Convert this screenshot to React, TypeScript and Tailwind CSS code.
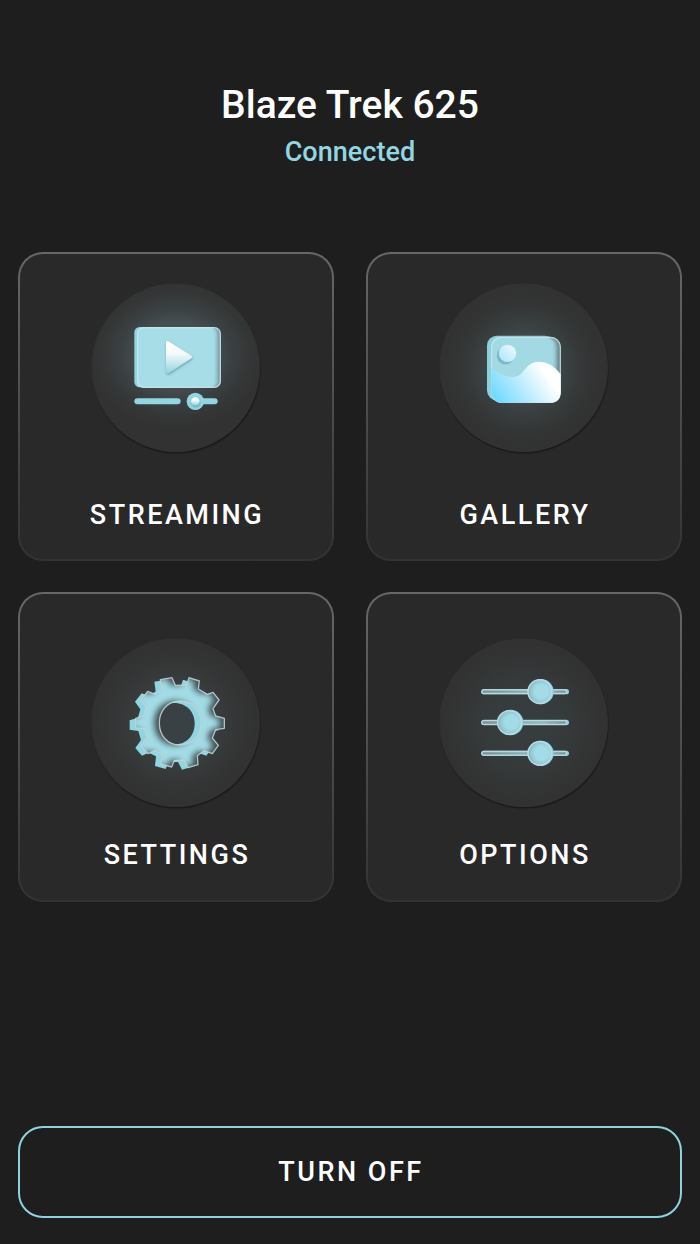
import type { ReactNode } from "react";

const GEAR =
  "M121 44L156 38L166 61L200 60L207 38L238 48L235 72L262 88L279 82L297 105L279 131L287 153L313 160V190L287 194L277 219L295 241L277 266L252 257L232 272L234 299L204 308L192 285L163 286L155 306L123 297L126 268L104 257L84 266L64 243L81 219L73 192L47 188V160L72 152L79 127L63 104L83 79L106 88L125 73Z";
const HOLE = "M180 108C219 108 243 138 243 174S219 240 180 240S118 210 118 174S142 108 180 108Z";
const BACK_HOLE = "M163 114C199 114 224 140 224 176S199 238 163 238S100 210 100 174S124 114 163 114Z";

function InnerShadow({ id, dx, blur, opacity }: { id: string; dx: number; blur: string; opacity: number }) {
  return (
    <filter id={id} x="-10%" y="-10%" width="120%" height="120%" colorInterpolationFilters="sRGB">
      <feComponentTransfer in="SourceAlpha" result="inverse">
        <feFuncA type="table" tableValues="1 0" />
      </feComponentTransfer>
      <feOffset in="inverse" dx={dx} dy="0" />
      <feGaussianBlur stdDeviation={blur} />
      <feComposite in2="SourceAlpha" operator="in" result="shade" />
      <feColorMatrix in="shade" values={`0 0 0 0 0.1  0 0 0 0 0.1  0 0 0 0 0.1  0 0 0 ${opacity} 0`} result="tint" />
      <feMerge>
        <feMergeNode in="SourceGraphic" />
        <feMergeNode in="tint" />
      </feMerge>
    </filter>
  );
}

function StreamingIcon() {
  return (
    <svg viewBox="0 0 168 168" className="size-full">
      <defs>
        <linearGradient id="play" x1="0" y1="0" x2="0" y2="1">
          <stop offset="0.1" stopColor="#fff" />
          <stop offset="0.4" stopColor="#f3f8fa" />
          <stop offset="1" stopColor="#8fd4e0" />
        </linearGradient>
        <InnerShadow id="screenShade" dx={-9} blur="7 1.5" opacity={0.42} />
        <filter id="soft" x="-30%" y="-30%" width="160%" height="160%">
          <feDropShadow dx="1" dy="4" stdDeviation="3" floodColor="#3d7580" floodOpacity="0.6" />
        </filter>
      </defs>
      <g transform="translate(33 31) scale(.33333)">
        <rect x="28" y="36" width="249" height="181" rx="16" fill="#8fd6e2" />
        <rect x="37" y="37" width="250" height="181" rx="19" fill="#a7dde7" filter="url(#screenShade)" />
        <rect x="38" y="38" width="248" height="179" rx="18" fill="none" stroke="#d0ebf0" strokeOpacity=".8" strokeWidth="4" />
        <path d="M123 84Q123 74 132 80L197 121Q205 126 197 131L132 174Q123 179 123 169Z" fill="url(#play)" filter="url(#soft)" />
        <path d="M37 259H158M230 259H269" stroke="#93d6e2" strokeWidth="18" strokeLinecap="round" />
        <circle cx="211" cy="259" r="26" fill="#93d6e2" />
        <circle cx="211" cy="259" r="12.500" fill="url(#play)" filter="url(#soft)" />
      </g>
    </svg>
  );
}

function GalleryIcon() {
  return (
    <svg viewBox="0 0 168 168" className="size-full">
      <defs>
        <linearGradient id="hill" gradientUnits="userSpaceOnUse" x1="65" y1="245" x2="205" y2="150">
          <stop offset="0" stopColor="#6ed9ff" />
          <stop offset="0.4" stopColor="#a9e7ff" />
          <stop offset="1" stopColor="#fff" />
        </linearGradient>
        <linearGradient id="sun" x1="0" y1="1" x2="1" y2="0">
          <stop offset="0" stopColor="#a5e4fa" />
          <stop offset="1" stopColor="#f4fcff" />
        </linearGradient>
        <InnerShadow id="photoShade" dx={-13} blur="7 1.5" opacity={0.48} />
        <filter id="sunShadow" x="-40%" y="-40%" width="180%" height="180%">
          <feDropShadow dx="-6" dy="7" stdDeviation="2" floodColor="#6ba9b5" floodOpacity="0.7" />
        </filter>
      </defs>
      <g transform="translate(35 36) scale(.33333)">
        <rect x="36" y="47" width="204" height="194" rx="30" fill="#8bd0dd" />
        <rect x="48" y="50" width="209" height="198" rx="31" fill="#a2d9e2" filter="url(#photoShade)" />
        <rect x="50" y="52" width="206" height="195" rx="30" fill="none" stroke="#cfe9ee" strokeOpacity=".75" strokeWidth="4" />
        <path
          d="M49 143Q80 170 112 171C151 171 147 125 191 125C218 125 239 139 257 163V215Q257 248 226 248H82C62 248 49 232 49 216Z"
          fill="url(#hill)"
        />
        <circle cx="97.500" cy="100" r="26" fill="url(#sun)" filter="url(#sunShadow)" />
      </g>
    </svg>
  );
}

function SettingsIcon() {
  return (
    <svg viewBox="0 0 168 168" className="size-full">
      <defs>
        <InnerShadow id="gearShade" dx={-15} blur="10" opacity={0.75} />
      </defs>
      <g transform="translate(28 26) scale(.33333)">
        <path d={GEAR} transform="translate(-18 6)" fill="#8fd6e2" />
        <path d={BACK_HOLE} fill="#394144" />
        <path d={GEAR + HOLE} fillRule="evenodd" fill="#a3dce6" filter="url(#gearShade)" />
        <path d={GEAR + HOLE} fill="none" stroke="#c3d3d6" strokeOpacity=".85" strokeWidth="4" strokeLinejoin="round" />
      </g>
    </svg>
  );
}

function OptionRow({ y, x }: { y: number; x: number }) {
  return (
    <g>
      <path d={`M42 ${y}H289`} stroke="#84d6e4" strokeWidth="16" strokeLinecap="round" />
      <path d={`M41 ${y}H284`} stroke="#bcd6db" strokeWidth="15" strokeLinecap="round" />
      <path d={`M41 ${y}H284`} stroke="url(#track)" strokeWidth="7" strokeLinecap="round" />
      <circle cx={x + 3} cy={y} r="38" fill="#84d6e4" />
      <circle cx={x - 0.5} cy={y} r="35.500" fill="url(#knob)" stroke="#b7dce3" strokeWidth="4.500" />
    </g>
  );
}

function OptionsIcon() {
  return (
    <svg viewBox="0 0 168 168" className="size-full">
      <defs>
        <linearGradient id="track" gradientUnits="userSpaceOnUse" x1="38" y1="0" x2="289" y2="0">
          <stop offset="0" stopColor="#798f94" />
          <stop offset="0.35" stopColor="#83a5ac" />
          <stop offset="0.7" stopColor="#8fb9c1" />
          <stop offset="1" stopColor="#7b9298" />
        </linearGradient>
        <radialGradient id="knob" cx="0.58" cy="0.5" r="0.62">
          <stop offset="0.45" stopColor="#a3dce6" />
          <stop offset="0.75" stopColor="#94c8d1" />
          <stop offset="1" stopColor="#789fa7" />
        </radialGradient>
      </defs>
      <g transform="translate(30 26) scale(.33333)">
        <OptionRow y={80} x={210} />
        <OptionRow y={172.5} x={119} />
        <OptionRow y={265} x={210} />
      </g>
    </svg>
  );
}

function Card({ label, className, glow, children }: { label: string; className: string; glow: string; children: ReactNode }) {
  return (
    <button type="button" className="rounded-[25px] bg-linear-to-b from-[#686868] to-[#333333] p-[2px]">
      <span className={`flex h-full flex-col items-center justify-between rounded-[23px] bg-[#292929] ${className}`}>
        <span className={`size-[168px] rounded-full bg-[#323232] shadow-[0.500px_1.500px_1px_#1a1a1a,-0.500px_-0.500px_1px_#353535] ${glow}`}>
          {children}
        </span>
        <span className="pl-[2px] text-[27px] leading-8 font-medium tracking-[2.500px]">{label}</span>
      </span>
    </button>
  );
}

export default function App() {
  return (
    <main className="flex h-[1244px] w-[700px] flex-col bg-[#1e1e1e] px-[18px] pt-[81px] pb-[26px] font-['Roboto',sans-serif] text-white">
      <header className="flex h-[171px] flex-col items-center">
        <h1 className="text-[39px] leading-[48px] font-medium">Blaze Trek 625</h1>
        <p className="mt-[7px] text-[27px] leading-8 font-medium tracking-[0.050px] text-[#93d6e2]">Connected</p>
      </header>
      <section className="grid grid-cols-2 grid-rows-[309px_310px] gap-x-8 gap-y-[31px]">
        <Card label="STREAMING" className="pt-[30px] pb-[28px]" glow="bg-[radial-gradient(ellipse_52%_44%_at_50%_42%,#444d50_45%,#3a4042_65%,#343636_85%,#323232_100%)]">
          <StreamingIcon />
        </Card>
        <Card label="GALLERY" className="pt-[30px] pb-[28px]" glow="bg-[radial-gradient(closest-side_at_50%_50%,#404a4c_35%,#383d3e_58%,#333434_80%,#323232_95%)]">
          <GalleryIcon />
        </Card>
        <Card label="SETTINGS" className="pt-[45px] pb-[29px]" glow="bg-[radial-gradient(closest-side_at_50%_50%,#3c4447_25%,#373a3b_58%,#333434_80%,#323232_95%)]">
          <SettingsIcon />
        </Card>
        <Card label="OPTIONS" className="pt-[45px] pb-[29px]" glow="bg-[radial-gradient(closest-side_at_50%_50%,#373d3f_20%,#35393a_58%,#333434_80%,#323232_95%)]">
          <OptionsIcon />
        </Card>
      </section>
      <button type="button" className="mt-auto h-[92px] rounded-[25px] border-2 border-[#8fd3df] pl-[2px] text-[27px] font-medium tracking-[2.500px]">
        TURN OFF
      </button>
    </main>
  );
}
